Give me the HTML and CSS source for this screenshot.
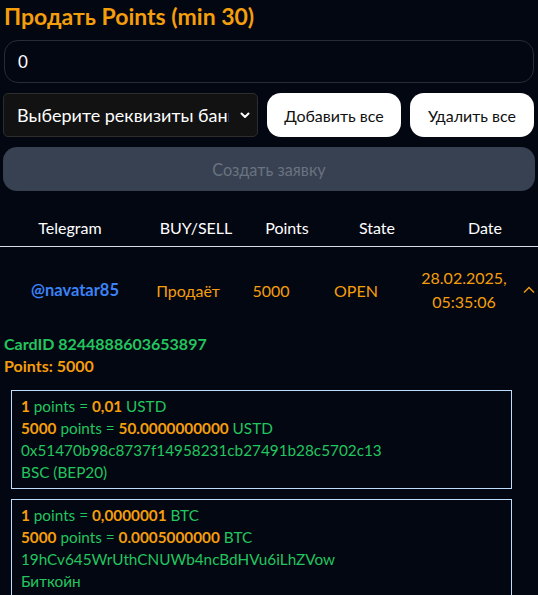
FILE: index.html
```html
<!DOCTYPE html>
<html lang="ru">
<head>
<meta charset="utf-8">
<link rel="stylesheet" href="styles.css">
</head>
<body>
<div class="page">
  <h2 class="title">Продать Points (min 30)</h2>
  <div class="input">0</div>
  <div class="controls">
    <div class="select">
      <span class="select-text">Выберите реквизиты банка</span>
      <svg class="select-caret" width="12" height="12" viewBox="0 0 12 12"><path d="M2.5 4.5 L6 8 L9.5 4.5" fill="none" stroke="#fff" stroke-width="2" stroke-linecap="round" stroke-linejoin="round"/></svg>
    </div>
    <button class="btn-white btn-add">Добавить все</button>
    <button class="btn-white btn-del">Удалить все</button>
  </div>
  <button class="btn-create">Создать заявку</button>
</div>

<div class="table">
  <div class="thead">
    <div class="h1">Telegram</div>
    <div class="h2">BUY/SELL</div>
    <div class="h3">Points</div>
    <div class="h4">State</div>
    <div class="h5">Date</div>
  </div>
  <div class="trow">
    <div class="c1 tg">@navatar85</div>
    <div class="c2 orange">Продаёт</div>
    <div class="c3 orange">5000</div>
    <div class="c4 orange">OPEN</div>
    <div class="c5 orange date">28.02.2025,<br>05:35:06</div>
    <div class="c6 chev"><svg width="12" height="8" viewBox="0 0 12 8"><path d="M1 6.5 L6 1.5 L11 6.5" fill="none" stroke="#f59e0b" stroke-width="1.4"/></svg></div>
  </div>
</div>

<div class="details">
  <div class="card-id">CardID 8244888603653897</div>
  <div class="card-points">Points: 5000</div>
  <div class="box">
    <div><b>1</b> points = <b>0,01</b> USTD</div>
    <div><b>5000</b> points = <b>50.0000000000</b> USTD</div>
    <div>0x51470b98c8737f14958231cb27491b28c5702c13</div>
    <div>BSC (BEP20)</div>
  </div>
  <div class="box">
    <div><b>1</b> points = <b>0,0000001</b> BTC</div>
    <div><b>5000</b> points = <b>0.0005000000</b> BTC</div>
    <div>19hCv645WrUthCNUWb4ncBdHVu6iLhZVow</div>
    <div>Биткойн</div>
  </div>
</div>
</body>
</html>
```

FILE: styles.css
```css
* { box-sizing: border-box; }
html, body {
  margin: 0;
  background: #030712;
  color: #fff;
  font-family: Lato, "Noto Sans", sans-serif;
}
body { overflow: hidden; height: 595px; width: 538px; }
.page {
  padding: 0 3px 0 3px;
  display: flex;
  flex-direction: column;
}
.title {
  margin: 0;
  padding-left: 1px;
  font-size: 23px;
  font-weight: 700;
  line-height: 32px;
  color: #f59e0b;
}
.input {
  margin: 8px 1px 0 1px;
  height: 43px;
  border: 1px solid #262c38;
  border-radius: 14px;
  padding: 0 13px;
  display: flex;
  align-items: center;
  font-size: 17px;
  color: #fff;
}
.controls {
  margin-top: 10px;
  display: flex;
  gap: 9px;
  height: 44px;
}
.select {
  width: 255px;
  background: #121212;
  border: 1px solid #2d2d2d;
  border-radius: 5px;
  display: flex;
  align-items: center;
  padding: 0 4px 0 13px;
  gap: 10px;
}
.select-text {
  flex: 1;
  overflow: hidden;
  white-space: nowrap;
  font-size: 18px;
  color: #fff;
}
.select-caret { flex: none; margin-right: 2px; }
.btn-white {
  height: 44px;
  border: none;
  background: #fff;
  color: #111;
  border-radius: 14px;
  font-family: inherit;
  font-size: 16px;
  padding: 0;
}
.btn-add { width: 134px; }
.btn-del { flex: 1; margin-right: 1px; }
.btn-create {
  margin-top: 10px;
  height: 44px;
  border: none;
  background: #374151;
  border-radius: 14px;
  color: #6b7280;
  font-family: inherit;
  font-size: 16.3px;
}
.table { margin-top: 18px; }
.thead {
  display: flex;
  height: 38px;
  align-items: center;
  text-align: center;
  font-size: 16px;
  border-bottom: 1px solid #d9dde3;
}
.thead > div { flex: none; }
.h1 { width: 140px; }
.h2 { width: 112px; }
.h3 { width: 70px; }
.h4 { width: 110px; }
.h5 { width: 106px; }
.trow {
  display: flex;
  height: 86px;
  align-items: center;
  text-align: center;
  font-size: 16px;
}
.trow > div { flex: none; }
.c1 { width: 150px; }
.c2 { width: 76px; }
.c3 { width: 90px; }
.c4 { width: 80px; }
.c5 { width: 136px; }
.c6 { width: 6px; }
.tg { color: #3b82f6; font-weight: 700; font-size: 16.5px; }
.orange { color: #f59e0b; }
.date { line-height: 24px; }
.chev { display: flex; justify-content: flex-start; }
.chev svg { flex: none; margin-left: -9px; }
.details { padding: 0 4px; }
.card-id {
  color: #22c55e;
  font-weight: 700;
  font-size: 16px;
  line-height: 22px;
}
.card-points {
  color: #f59e0b;
  font-weight: 700;
  font-size: 16px;
  line-height: 22px;
}
.box {
  margin: 13px 0 0 7px;
  width: 501px;
  border: 1px solid #bfdbfe;
  padding: 4px 9px 5px;
  color: #22c55e;
  font-size: 15.3px;
  line-height: 22px;
}
.box + .box { margin-top: 10px; }
.box b { color: #f59e0b; font-weight: 700; }
```
